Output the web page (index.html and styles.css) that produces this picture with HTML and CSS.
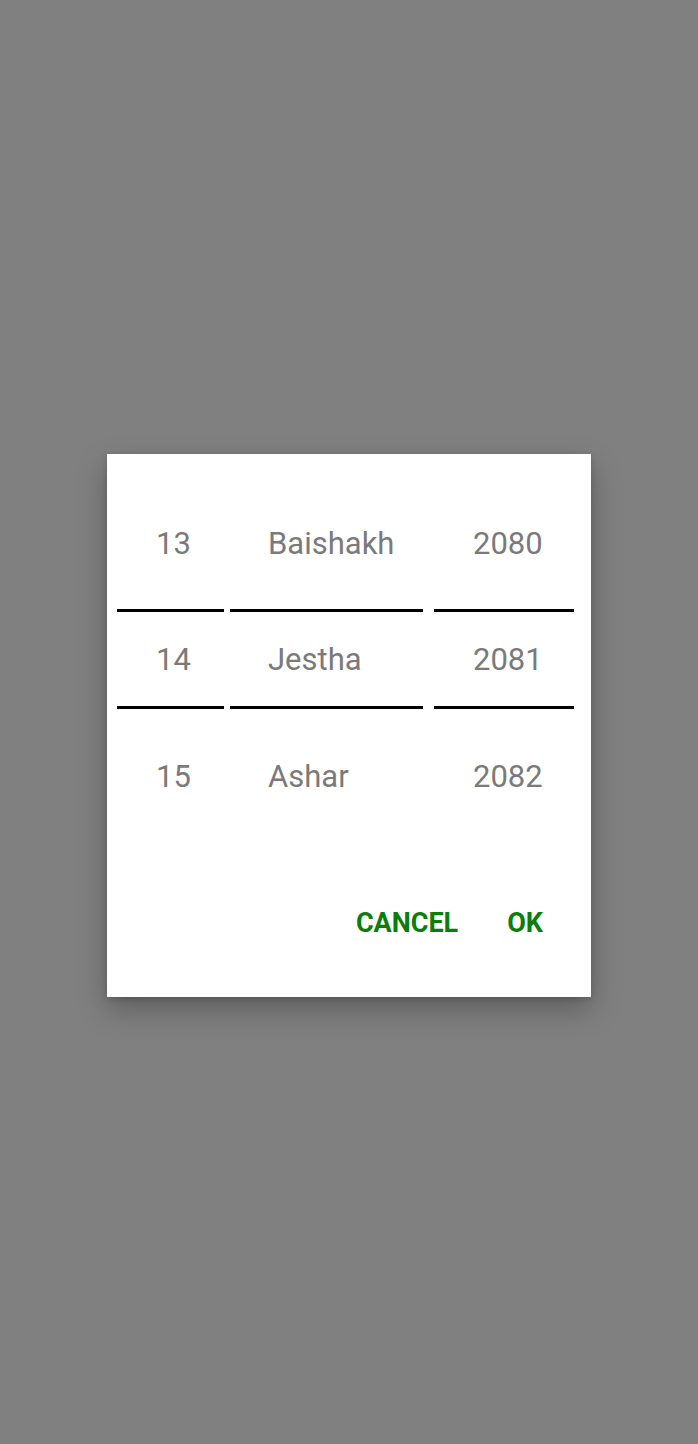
FILE: index.html
```html
<!DOCTYPE html>
<html>
<head>
<meta charset="utf-8">
<link rel="stylesheet" href="styles.css">
</head>
<body>
<div class="dialog">
  <div class="picker">
    <div class="col col-day">
      <div class="item item-top">13</div>
      <div class="line"></div>
      <div class="item item-mid">14</div>
      <div class="line"></div>
      <div class="item item-bot">15</div>
    </div>
    <div class="col col-month">
      <div class="item item-top">Baishakh</div>
      <div class="line"></div>
      <div class="item item-mid">Jestha</div>
      <div class="line"></div>
      <div class="item item-bot">Ashar</div>
    </div>
    <div class="col col-year">
      <div class="item item-top">2080</div>
      <div class="line"></div>
      <div class="item item-mid">2081</div>
      <div class="line"></div>
      <div class="item item-bot">2082</div>
    </div>
  </div>
  <div class="actions">
    <span class="btn btn-cancel">CANCEL</span>
    <span class="btn btn-ok">OK</span>
  </div>
</div>
</body>
</html>
```

FILE: styles.css
```css
html, body {
  margin: 0;
  padding: 0;
}
body {
  background: #808080;
  width: 698px;
  height: 1444px;
  overflow: hidden;
  font-family: Roboto, "Liberation Sans", sans-serif;
}
.dialog {
  margin: 454px 0 0 107px;
  width: 484px;
  height: 543px;
  box-sizing: border-box;
  background: #ffffff;
  box-shadow: 0 12px 28px rgba(0, 0, 0, 0.28), 0 2px 6px rgba(0, 0, 0, 0.15);
  padding: 24px 17px 44px 10px;
  display: flex;
  flex-direction: column;
}
.picker {
  display: flex;
}
.col {
  display: flex;
  flex-direction: column;
}
.col-day { width: 107px; }
.col-month { width: 193px; margin-left: 6px; }
.col-year { width: 140px; margin-left: 11px; }
.item {
  display: flex;
  align-items: center;
  padding-left: 39px;
  font-size: 31px;
  color: #7a7a7a;
  line-height: 1;
}
.col-month .item { padding-left: 38px; }
.item-top { height: 131px; }
.item-mid { height: 94px; }
.item-bot { height: 135px; }
.line {
  height: 3px;
  background: #000000;
}
.actions {
  margin-top: 49px;
  height: 60px;
  display: flex;
  justify-content: flex-end;
  align-items: center;
  gap: 49px;
  padding-right: 31px;
}
.btn {
  font-size: 27px;
  font-weight: 700;
  color: #0b7d0b;
  line-height: 1;
}
```
